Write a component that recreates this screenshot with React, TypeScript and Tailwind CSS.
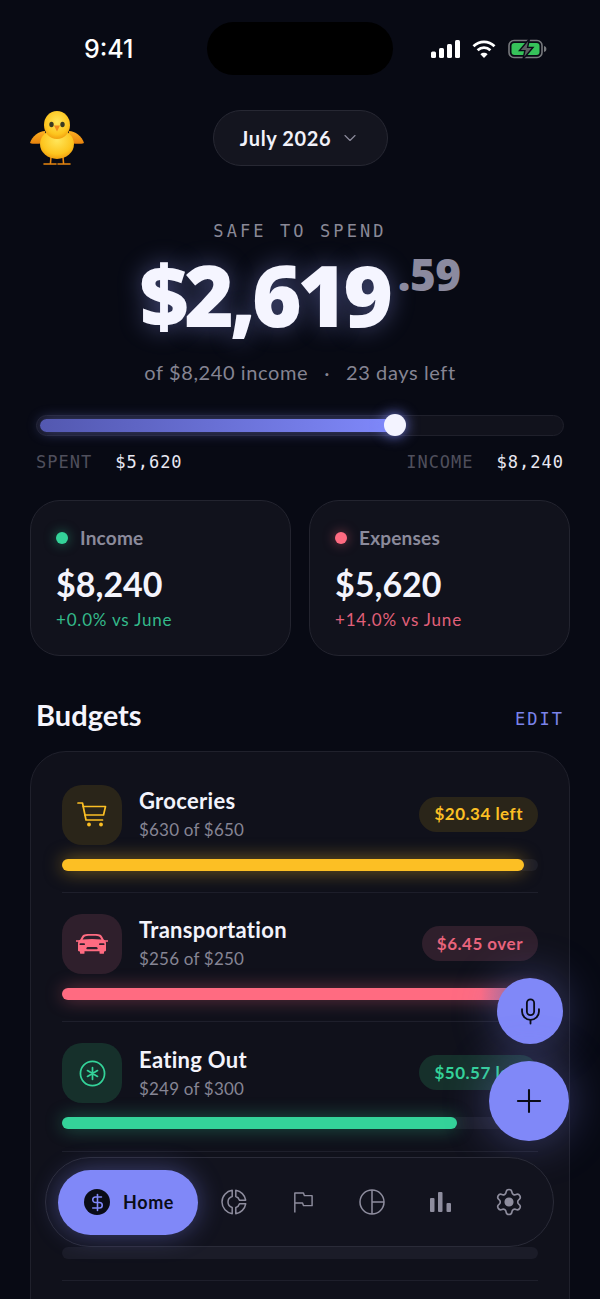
import React from "react";
import { ChevronDown, DollarSign, Mic, Plus, Settings } from "lucide-react";

void React;

const SANS = "font-['Lato','Noto_Sans',sans-serif]";
const MONO = "font-['DejaVu_Sans_Mono','Liberation_Mono',monospace]";

function Chick() {
  return (
    <svg width="56" height="56" viewBox="0 0 56 56" aria-hidden="true">
      <defs>
        <radialGradient id="chickBody" cx="50%" cy="38%" r="65%">
          <stop offset="0%" stopColor="#ffe65a" />
          <stop offset="70%" stopColor="#fdc51e" />
          <stop offset="100%" stopColor="#f09a0c" />
        </radialGradient>
        <linearGradient id="chickWing" x1="0" y1="0" x2="0" y2="1">
          <stop offset="0%" stopColor="#fdb022" />
          <stop offset="100%" stopColor="#e8820c" />
        </linearGradient>
      </defs>
      <path d="M16 21c-6 0-13 5-15 12 4 1.500 11 1 16-1z" fill="url(#chickWing)" />
      <path d="M40 21c6 0 13 5 15 12-4 1.500-11 1-16-1z" fill="url(#chickWing)" />
      <path d="M22 47l-.5 6M34 47l.5 6M15 54h12M29 54h12" stroke="#e8860f" strokeWidth="1.6" strokeLinecap="round" fill="none" />
      <ellipse cx="28" cy="34" rx="17" ry="15" fill="url(#chickBody)" />
      <ellipse cx="28" cy="15" rx="13" ry="14" fill="url(#chickBody)" />
      <ellipse cx="22.5" cy="14.5" rx="2.2" ry="2.8" fill="#3a3a22" />
      <ellipse cx="33.5" cy="14.5" rx="2.2" ry="2.8" fill="#3a3a22" />
      <path d="M25 15.500h6l-3 6z" fill="#f08a1c" />
    </svg>
  );
}

function StatusIcons() {
  return (
    <div className="flex items-center gap-[12px]">
      <svg width="30" height="20" viewBox="0 0 30 20" fill="#fff" aria-hidden="true">
        <rect x="1" y="12.5" width="5" height="6.5" rx="1.5" />
        <rect x="9" y="9" width="5" height="10" rx="1.5" />
        <rect x="17" y="5" width="5" height="14" rx="1.5" />
        <rect x="25" y="1" width="5" height="18" rx="1.5" />
      </svg>
      <svg width="24" height="20" viewBox="0 0 24 20" fill="none" stroke="#fff" aria-hidden="true">
        <path d="M1.5 7.2C7.5 1.4 16.5 1.4 22.5 7.2" strokeWidth="2.8" />
        <path d="M5.6 11.2c3.8-3.5 9-3.5 12.8 0" strokeWidth="2.8" />
        <path d="M12 19l-3.6-3.8c2-1.8 5.2-1.8 7.2 0z" fill="#fff" stroke="none" />
      </svg>
      <svg width="39" height="22" viewBox="0 0 39 22" aria-hidden="true">
        <rect x="1" y="2.5" width="33" height="17" rx="5" fill="none" stroke="#77797d" strokeWidth="1.6" />
        <rect x="3.5" y="5" width="28" height="12" rx="3" fill="#36c25a" />
        <path d="M36 8c1.6.4 2.4 1.5 2.4 3S37.600 13.600 36 14z" fill="#77797d" />
        <path d="M21.500 .8L11.500 12.600h5.400L15 21.200l10-11.800h-5.400z" fill="#5c5f61" stroke="#0a0c17" strokeWidth="1.4" />
      </svg>
    </div>
  );
}

function Cart() {
  return (
    <svg width="30" height="25" viewBox="0 0 30 25" fill="none" stroke="#fbbf24" strokeWidth="1.7" strokeLinejoin="round" strokeLinecap="round" aria-hidden="true">
      <path d="M1 1h4.500l3.500 17h16.500" />
      <path d="M6.200 4.500H28.500l-2 8.500H8" />
      <circle cx="12" cy="22.500" r="1.900" fill="#fbbf24" stroke="none" />
      <circle cx="24" cy="22.500" r="1.900" fill="#fbbf24" stroke="none" />
    </svg>
  );
}

function Car() {
  return (
    <svg width="32" height="22" viewBox="0 0 32 24" preserveAspectRatio="none" fill="#ff6b81" aria-hidden="true">
      <path d="M8.500 1.500C11 .8 21 .8 23.500 1.500c1.300.4 2.100 1.300 2.700 2.500l1.500 3.200c1.500.9 2.300 2.300 2.300 4.200v7.500c0 .8-.5 1.300-1.300 1.300h-.7v1.500c0 .7-.4 1-1 1h-2.500c-.6 0-1-.3-1-1V20H8.500v1.700c0 .7-.4 1-1 1H5c-.6 0-1-.3-1-1v-1.500h-.7c-.8 0-1.300-.5-1.300-1.300v-7.500c0-1.900.8-3.300 2.300-4.200L5.800 4c.6-1.200 1.400-2.100 2.700-2.500zM9.500 3.500C8.700 3.800 8.200 4.200 7.800 5L6.600 7.200c6.300-.9 12.500-.9 18.800 0L24.200 5c-.4-.8-.9-1.200-1.700-1.500-2.500-.5-10.500-.5-13 0z" />
      <path d="M0 8h4v1.600H0zM28 8h4v1.600h-4z" />
      <rect x="3.500" y="11.200" width="5.500" height="2" rx="1" fill="#2f1f2c" />
      <rect x="23" y="11.200" width="5.500" height="2" rx="1" fill="#2f1f2c" />
      <rect x="10.500" y="15.200" width="11" height="2.600" rx="1.300" fill="#2f1f2c" />
    </svg>
  );
}

function AsteriskCircle() {
  return (
    <svg width="27" height="27" viewBox="0 0 28 28" fill="none" stroke="#34d399" strokeWidth="1.8" strokeLinecap="round" aria-hidden="true">
      <circle cx="14" cy="14" r="12.500" />
      <path d="M14 8v12M8.800 11l10.400 6M19.200 11L8.800 17" />
    </svg>
  );
}

function SplitPie() {
  return (
    <svg width="26" height="26" viewBox="0 0 26 26" fill="none" stroke="#8e8d9e" strokeWidth="1.5" strokeLinejoin="round" aria-hidden="true">
      <path d="M11.200 1.300C5.500 2.100 1 7 1 13s4.500 10.900 10.200 11.700V18.500C8.700 17.800 7 15.600 7 13s1.700-4.800 4.200-5.500z" />
      <path d="M14.800 1.300c5.100.7 9.100 4.800 9.900 9.900h-6.200c-.5-1.700-2-3.200-3.700-3.700z" />
      <path d="M24.700 14.800c-.8 5.100-4.800 9.200-9.900 9.900v-6.200c1.700-.5 3.200-2 3.700-3.700z" />
    </svg>
  );
}

function FlagIcon() {
  return (
    <svg width="20" height="22" viewBox="0 0 22 24" fill="none" stroke="#8e8d9e" strokeWidth="1.6" strokeLinejoin="round" aria-hidden="true">
      <path d="M2 23.500V2h9.500l1 3H21v11h-9.500l-1-3H2" />
    </svg>
  );
}

function QuarterPie() {
  return (
    <svg width="26" height="26" viewBox="0 0 26 26" fill="none" stroke="#8e8d9e" strokeWidth="1.5" aria-hidden="true">
      <circle cx="13" cy="13" r="12" />
      <path d="M13 1v24M13 13h12" />
    </svg>
  );
}

function BarsIcon() {
  return (
    <svg width="21" height="20" viewBox="0 0 21 20" fill="#8e8d9e" aria-hidden="true">
      <rect x="0" y="6" width="4.500" height="14" rx="1" />
      <rect x="8" y="0" width="4.500" height="20" rx="1" />
      <rect x="16.500" y="11" width="4.500" height="9" rx="1" />
    </svg>
  );
}

function GearIcon() {
  return (
    <div className="relative flex h-[30px] w-[30px] items-center justify-center">
      <Settings className="h-[30px] w-[30px] text-[#8e8d9e]" strokeWidth={1.3} aria-hidden="true" />
      <span className="absolute h-[8px] w-[8px] rounded-full bg-[#8e8d9e]" />
    </div>
  );
}

interface BudgetRowProps {
  name: string;
  detail: string;
  badge: string;
  icon: React.ReactNode;
  iconBg: string;
  textColor: string;
  badgeBg: string;
  barClass: string;
  barWidth: string;
}

function BudgetRow({ name, detail, badge, icon, iconBg, textColor, badgeBg, barClass, barWidth }: BudgetRowProps) {
  return (
    <div className="border-b border-[#1e1f2b] pb-[21.400px] pt-[21px] first:pt-0">
      <div className="flex h-[60px] items-center">
        <div className={`flex h-[60px] w-[60px] items-center justify-center rounded-[20px] ${iconBg}`}>{icon}</div>
        <div className="ml-[17px] flex-1">
          <div className="text-[22px] font-bold leading-[28px] tracking-[0.3px] text-[#f3f3fb]">{name}</div>
          <div className="mt-[3px] text-[17px] leading-[24px] tracking-[0.2px] text-[#868594]">{detail}</div>
        </div>
        <div className={`mb-[1px] flex h-[35px] items-center rounded-full px-[15px] text-[17px] font-bold tracking-[0.5px] ${badgeBg} ${textColor}`}>
          {badge}
        </div>
      </div>
      <div className="mt-[14px] h-[12px] rounded-full bg-[#1b1c28]">
        <div className={`h-full rounded-full ${barClass}`} style={{ width: barWidth }} />
      </div>
    </div>
  );
}

function StatCard({ label, amount, delta, dot, deltaColor }: { label: string; amount: string; delta: string; dot: string; deltaColor: string }) {
  return (
    <div className="h-[156px] rounded-[30px] border border-[#23242f] bg-[#11121c] pl-[25px] pt-[25px]">
      <div className="flex items-center">
        <span className={`h-[12px] w-[12px] rounded-full ${dot}`} />
        <span className="ml-[12px] text-[19px] font-bold leading-[24px] tracking-[0.2px] text-[#8b8a9b]">{label}</span>
      </div>
      <div className="mt-[14px] text-[34px] font-bold leading-[40px] text-[#f4f4fc]">{amount}</div>
      <div className={`mt-[4px] text-[17px] leading-[24px] tracking-[0.8px] ${deltaColor}`}>{delta}</div>
    </div>
  );
}

export default function App() {
  return (
    <div className={`relative h-[1299px] w-[600px] overflow-hidden bg-[#080a14] ${SANS}`}>
      {/* status bar */}
      <div className="flex h-[96px] items-start justify-between pl-[84px] pr-[53px] pt-[22px]">
        <div className="mt-[12px] font-['Inter',sans-serif] text-[25px] font-medium leading-[30px] text-white">9:41</div>
        <div className="mt-[16px]">
          <StatusIcons />
        </div>
      </div>
      <div className="absolute left-[207px] top-[22px] h-[53px] w-[186px] rounded-full bg-black" />

      {/* header */}
      <div className="relative mt-[14px] flex h-[56px] items-center justify-center">
        <div className="absolute left-[29px] top-[0px]">
          <Chick />
        </div>
        <div className="flex h-[56px] w-[175px] items-center justify-center rounded-full border border-[#272833] bg-[#14151f]">
          <span className="text-[20px] font-bold tracking-[0.6px] text-[#f1f1f9]">July 2026</span>
          <ChevronDown className="ml-[9px] h-[20px] w-[20px] text-[#8b8a9b]" strokeWidth={1.4} aria-hidden="true" />
        </div>
      </div>

      {/* hero */}
      <div className="mt-[55px] flex flex-col items-center">
        <div className={`text-[17px] leading-[20px] tracking-[3.100px] text-[#8a8997] ${MONO}`}>SAFE TO SPEND</div>
        <div className="mt-[8px] flex h-[90px] items-start font-['Noto_Sans',sans-serif] font-black">
          <span className="text-[85px] leading-[90px] tracking-[-4.200px] text-[#f5f5ff] [text-shadow:0_0_24px_rgba(150,160,255,0.4)]">$2,619</span>
          <span className="ml-[9px] mt-[-2px] text-[44px] leading-[54px] tracking-[-0.500px] text-[#8b8a9f]">.59</span>
        </div>
        <div className="mt-[20px] text-[20px] leading-[26px] tracking-[0.6px] text-[#858492]">
          of $8,240 income<span className="mx-[16px]">·</span>23 days left
        </div>
      </div>

      {/* progress */}
      <div className="mx-[36px] mt-[30px]">
        <div className="relative h-[21px] rounded-full border border-[#1f202b] bg-[#11121c] p-[3px]">
          <div className="h-full w-[68.500%] rounded-full bg-gradient-to-r from-[#5358b0] to-[#8089fb] shadow-[0_0_14px_rgba(128,137,251,0.45)]" />
          <div className="absolute left-[347px] top-[-2px] h-[22px] w-[22px] rounded-full bg-[#f3f3ff] shadow-[0_0_14px_rgba(128,137,251,0.9)]" />
        </div>
        <div className={`mt-[15px] flex justify-between text-[17px] leading-[22px] tracking-[1px] ${MONO}`}>
          <div>
            <span className="text-[#4f4f5c]">SPENT</span>
            <span className="ml-[23px] text-[#e8e8f2]">$5,620</span>
          </div>
          <div>
            <span className="text-[#4f4f5c]">INCOME</span>
            <span className="ml-[23px] text-[#e8e8f2]">$8,240</span>
          </div>
        </div>
      </div>

      {/* stat cards */}
      <div className="mx-[30px] mt-[27px] grid grid-cols-2 gap-[18px]">
        <StatCard
          label="Income"
          amount="$8,240"
          delta="+0.0% vs June"
          dot="bg-[#34d399] shadow-[0_0_12px_rgba(52,211,153,0.5)]"
          deltaColor="text-[#34b98a]"
        />
        <StatCard
          label="Expenses"
          amount="$5,620"
          delta="+14.0% vs June"
          dot="bg-[#ff6b81] shadow-[0_0_12px_rgba(255,107,129,0.5)]"
          deltaColor="text-[#e0607a]"
        />
      </div>

      {/* budgets */}
      <div className="mx-[36px] mt-[42px] flex items-center justify-between">
        <div className="text-[29px] font-bold leading-[34px] text-[#f5f5fd]">Budgets</div>
        <div className={`mt-[9px] text-[17px] tracking-[2px] text-[#7b83ea] ${MONO}`}>EDIT</div>
      </div>

      <div className="mx-[30px] mt-[18px] h-[700px] rounded-[36px] border border-[#20212c] bg-[#10111b] px-[31px] pt-[33px]">
        <BudgetRow
          name="Groceries"
          detail="$630 of $650"
          badge="$20.34 left"
          icon={<Cart />}
          iconBg="bg-[#2a2519]"
          textColor="text-[#fbbf24]"
          badgeBg="bg-[#2a2519]"
          barClass="bg-[#fcbf24] shadow-[0_0_18px_rgba(252,191,36,0.5)]"
          barWidth="97%"
        />
        <BudgetRow
          name="Transportation"
          detail="$256 of $250"
          badge="$6.45 over"
          icon={<Car />}
          iconBg="bg-[#2f1f2c]"
          textColor="text-[#e9647c]"
          badgeBg="bg-[#2f1f2c]"
          barClass="bg-gradient-to-r from-[#ff6b81] via-[#ff6b81] via-[88%] to-[#6a5a90] shadow-[0_0_18px_rgba(255,107,129,0.4)]"
          barWidth="100%"
        />
        <BudgetRow
          name="Eating Out"
          detail="$249 of $300"
          badge="$50.57 left"
          icon={<AsteriskCircle />}
          iconBg="bg-[#16302b]"
          textColor="text-[#34d399]"
          badgeBg="bg-[#16302b]"
          barClass="bg-[#34d399] shadow-[0_0_18px_rgba(52,211,153,0.4)]"
          barWidth="83%"
        />
        <div className="border-b border-[#1e1f2b] pb-[21px] pt-[21px]">
          <div className="h-[60px]" />
          <div className="mt-[14px] h-[12px] rounded-full bg-[#1b1c28]" />
        </div>
      </div>

      {/* floating buttons */}
      <div className="absolute left-[497px] top-[978px] flex h-[66px] w-[66px] items-center justify-center rounded-full bg-[#8088f8] shadow-[0_0_46px_rgba(128,136,248,0.38)]">
        <Mic className="h-[29px] w-[29px] text-[#0a0c17]" strokeWidth={1.5} aria-hidden="true" />
      </div>
      <div className="absolute left-[489px] top-[1061px] flex h-[80px] w-[80px] items-center justify-center rounded-full bg-[#8088f8] shadow-[0_0_46px_rgba(128,136,248,0.38)]">
        <Plus className="h-[38px] w-[38px] text-[#0a0c17]" strokeWidth={1.3} aria-hidden="true" />
      </div>

      {/* tab bar */}
      <div className="absolute left-[45px] top-[1157px] flex h-[90px] w-[509px] items-center rounded-full border border-[#2a2b38] bg-[#12131e] pl-[12px]">
        <div className="flex h-[65px] w-[140px] items-center rounded-full bg-[#8088f8] pl-[26px] shadow-[0_0_26px_rgba(128,136,248,0.4)]">
          <span className="flex h-[26px] w-[26px] items-center justify-center rounded-full bg-[#0a0c17]">
            <DollarSign className="h-[19px] w-[19px] text-[#8088f8]" strokeWidth={2} aria-hidden="true" />
          </span>
          <span className="ml-[13px] text-[18px] font-bold tracking-[0.6px] text-[#0a0c17]">Home</span>
        </div>
        <div className="ml-[2px] flex items-center">
          <div className="flex w-[68.750px] justify-center"><SplitPie /></div>
          <div className="flex w-[68.750px] justify-center"><FlagIcon /></div>
          <div className="flex w-[68.750px] justify-center"><QuarterPie /></div>
          <div className="flex w-[68.750px] justify-center"><BarsIcon /></div>
          <div className="flex w-[68.750px] justify-center"><GearIcon /></div>
        </div>
      </div>
    </div>
  );
}
